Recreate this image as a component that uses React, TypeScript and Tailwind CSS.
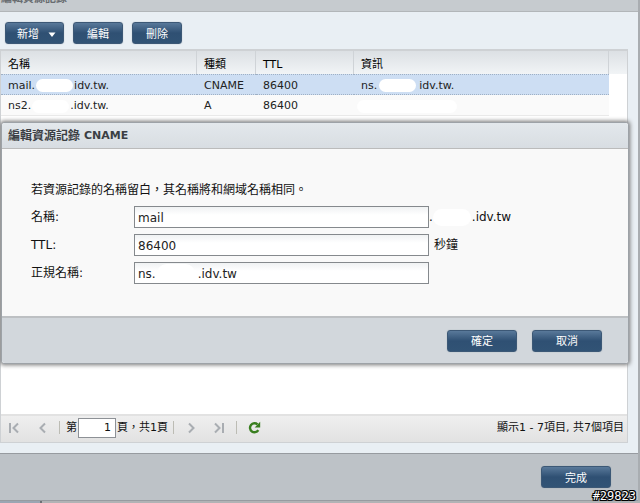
import React from "react";

const FONT = "font-['DejaVu_Sans','Noto_Sans_CJK_TC',sans-serif]";

function ActionButton({ children, className }: { children: React.ReactNode; className: string }) {
  return (
    <button
      type="button"
      className={`flex h-[22px] items-center justify-center rounded-[3px] border border-[#3c5876] bg-linear-to-b from-[#59799a] via-[#2f5073] to-[#315375] pt-[3px] text-[11px] leading-4 text-white shadow-[0_0_1px_#8796a5] ${className}`}
    >
      {children}
    </button>
  );
}

/* White pill that hides part of a domain name. */
function Mask({ className }: { className: string }) {
  return <span aria-hidden="true" className={`inline-block rounded-full bg-white align-middle ${className}`} />;
}

function Separator({ className }: { className: string }) {
  return <span className={`h-[13px] w-px bg-[#bcbcb4] ${className}`} />;
}

function PageButton({ label, className, path }: { label: string; className: string; path: string }) {
  return (
    <button type="button" aria-label={label} className={className}>
      <svg width="12" height="12" viewBox="0 0 12 12" fill="none" stroke="#a9adb2" strokeWidth="2">
        <path d={path} />
      </svg>
    </button>
  );
}

function Records() {
  const th = "border-r border-[#cfd3d7] pl-[7px] pt-[4px] text-left font-normal";
  return (
    <table className="w-full table-fixed border-separate border-spacing-0 text-[11px] leading-4 text-[#222]">
      <colgroup>
        <col className="w-[196px]" />
        <col className="w-[59px]" />
        <col className="w-[98px]" />
        <col />
        <col className="w-[18px]" />
      </colgroup>
      <thead>
        <tr className="h-[23px] bg-linear-to-b from-[#dce0e4] to-[#f1f4f6] text-black">
          <th className={th}>名稱</th>
          <th className={th}>種類</th>
          <th className={th}>TTL</th>
          <th className={th}>資訊</th>
          <th />
        </tr>
      </thead>
      <tbody>
        <tr className="h-[21px] [&>td]:border-y [&>td]:border-dotted [&>td]:border-[#9fb0c4] [&>td]:bg-[#cddef3] [&>td]:pl-[7px] [&>td]:pt-[2px] [&>td:last-child]:border-white [&>td:last-child]:bg-white">
          <td>mail.<Mask className="mx-px h-[13px] w-[37px]" />idv.tw.</td>
          <td>CNAME</td>
          <td>86400</td>
          <td>ns.<Mask className="ml-[2px] mr-[3px] h-[13px] w-[37px]" />idv.tw.</td>
          <td />
        </tr>
        <tr className="h-[21px] [&>td]:border-b [&>td]:border-[#e9e9e9] [&>td]:bg-[#fafafa] [&>td]:pl-[7px] [&>td]:pt-[2px] [&>td:last-child]:border-white [&>td:last-child]:bg-white">
          <td>ns2.<Mask className="mx-px h-[13px] w-[37px]" />.idv.tw.</td>
          <td>A</td>
          <td>86400</td>
          <td><Mask className="-ml-1 h-[13px] w-[100px]" /></td>
          <td />
        </tr>
      </tbody>
    </table>
  );
}

function Pager() {
  return (
    <div className="flex h-[28px] shrink-0 items-center border-t-2 border-[#e2e2e2] bg-linear-to-b from-[#efefef] to-[#e2e2e2] pb-[3px] text-[11px] leading-4 text-[#111]">
      <PageButton label="第一頁" className="ml-[7px]" path="M2 1v10M10 1.500L5.500 6l4.500 4.500" />
      <PageButton label="上一頁" className="ml-[16px]" path="M9 1.500L4.500 6 9 10.500" />
      <Separator className="ml-[11px] mr-[6px]" />
      <label htmlFor="page">第</label>
      <input
        id="page"
        defaultValue="1"
        className="ml-px h-[20px] w-[38px] border border-[#8d9196] bg-white pr-1 text-right"
      />
      <span className="ml-px">頁，共1頁</span>
      <Separator className="ml-[5px]" />
      <PageButton label="下一頁" className="ml-[12px]" path="M3 1.500L7.500 6 3 10.500" />
      <PageButton label="最後一頁" className="ml-[15px]" path="M2 1.500L6.500 6 2 10.500M10 1v10" />
      <Separator className="ml-[11px]" />
      <button type="button" aria-label="重新整理" className="ml-[11px]">
        <svg width="13" height="13" viewBox="0 0 13 13">
          <path d="M9.500 3.400A4.500 4.500 0 1 0 10.300 9.200" fill="none" stroke="#397f1f" strokeWidth="2.400" />
          <path d="M12.200.8v5.700H6.700z" fill="#397f1f" />
        </svg>
      </button>
      <span className="ml-auto mr-[3px]">顯示1 - 7項目, 共7個項目</span>
    </div>
  );
}

function EditDialog() {
  const input =
    "h-[22px] w-full border border-[#85898d] bg-linear-to-b from-[#f0f2f3] to-white to-40% px-[3px] pt-[2px] text-xs text-[#222]";
  return (
    <section
      role="dialog"
      aria-labelledby="dialog-title"
      className="absolute left-px right-[11px] top-[122px] rounded-[3px] border border-[#9da2a7] bg-[#f9f9f9] shadow-[0_0_4px_1px_#777]"
    >
      <h2
        id="dialog-title"
        className="flex h-[26px] items-center gap-1 rounded-t-[3px] border-b border-[#bbb] bg-linear-to-b from-[#e3e8ec] to-[#d8dde2] pl-[6px] text-[11px] font-bold leading-4 text-[#3b3f44]"
      >
        <span className="text-xs">編輯資源記錄</span> CNAME
      </h2>
      <form className="px-[29px] pb-[32px] pt-[33px] text-xs text-[#111]">
        <p className="mb-[8px] leading-4">若資源記錄的名稱留白，其名稱將和網域名稱相同。</p>
        <div className="grid grid-cols-[103px_295px_1fr] items-center gap-y-[6px]">
          <label htmlFor="name">名稱:</label>
          <input id="name" defaultValue="mail" className={input} />
          <span>.<Mask className="mr-px h-[17px] w-[38px]" />.idv.tw</span>
          <label htmlFor="ttl">TTL:</label>
          <input id="ttl" defaultValue="86400" className={input} />
          <span className="pl-[5px]">秒鐘</span>
          <label htmlFor="canonical">正規名稱:</label>
          <div className="relative">
            <input id="canonical" defaultValue="ns.           .idv.tw" className={input} />
            <span className="absolute left-[23px] top-[2px] h-[19px] w-[38px] rounded-full bg-white" />
          </div>
        </div>
      </form>
      <div className="flex h-[47px] items-center justify-end gap-[15px] rounded-b-[3px] border-t-2 border-[#bdc0c3] bg-[#d2d7dc] pr-[26px]">
        <ActionButton className="w-[70px]">確定</ActionButton>
        <ActionButton className="w-[70px]">取消</ActionButton>
      </div>
    </section>
  );
}

export default function App() {
  return (
    <main className={`relative flex h-screen min-h-[440px] flex-col overflow-hidden bg-[#b1b3b5] ${FONT}`}>
      <div className="flex min-h-0 flex-1 flex-col border-r-2 border-[#a9adb1] bg-[#e9eff4]">
        <header className="flex h-[12px] shrink-0 items-end overflow-hidden border-b border-[#b2b6b9] bg-[#c6cbcf] pb-[4px] pl-px text-[11px] font-bold leading-4 text-[#686c70]">
          <h1>編輯資源記錄</h1>
        </header>
        <div className="flex h-[37px] shrink-0 items-end gap-[9px] pb-[5px] pl-[5px]">
          <ActionButton className="w-[59px] gap-[9px] pl-1">
            新增
            <svg width="8" height="5" viewBox="0 0 8 5" fill="currentColor">
              <path d="M.500.500h7L4 5z" />
            </svg>
          </ActionButton>
          <ActionButton className="w-[50px]">編輯</ActionButton>
          <ActionButton className="w-[50px]">刪除</ActionButton>
        </div>
        <div className="mb-[10px] mr-[10px] flex min-h-0 flex-1 flex-col border border-t-2 border-[#ced1d4] bg-white">
          <div className="min-h-0 flex-1">
            <Records />
          </div>
          <Pager />
        </div>
        <footer className="flex h-[48px] shrink-0 items-center justify-end border-y border-[#979ba0] bg-[#bdc2c7] pr-[27px]">
          <ActionButton className="w-[70px]">完成</ActionButton>
        </footer>
      </div>
      <div className="flex h-[2px] shrink-0">
        <span className="w-[42px] border-r-2 border-[#6c7176] bg-[#9ba6b3]" />
      </div>
      <EditDialog />
      <span className="absolute bottom-0 right-[4px] font-['DejaVu_Sans_Mono',monospace] text-xs leading-[14px] text-white [text-shadow:1px_0_#000,-1px_0_#000,0_1px_#000,0_-1px_#000,1px_1px_#000,-1px_-1px_#000,1px_-1px_#000,-1px_1px_#000]">
        #29823
      </span>
    </main>
  );
}
